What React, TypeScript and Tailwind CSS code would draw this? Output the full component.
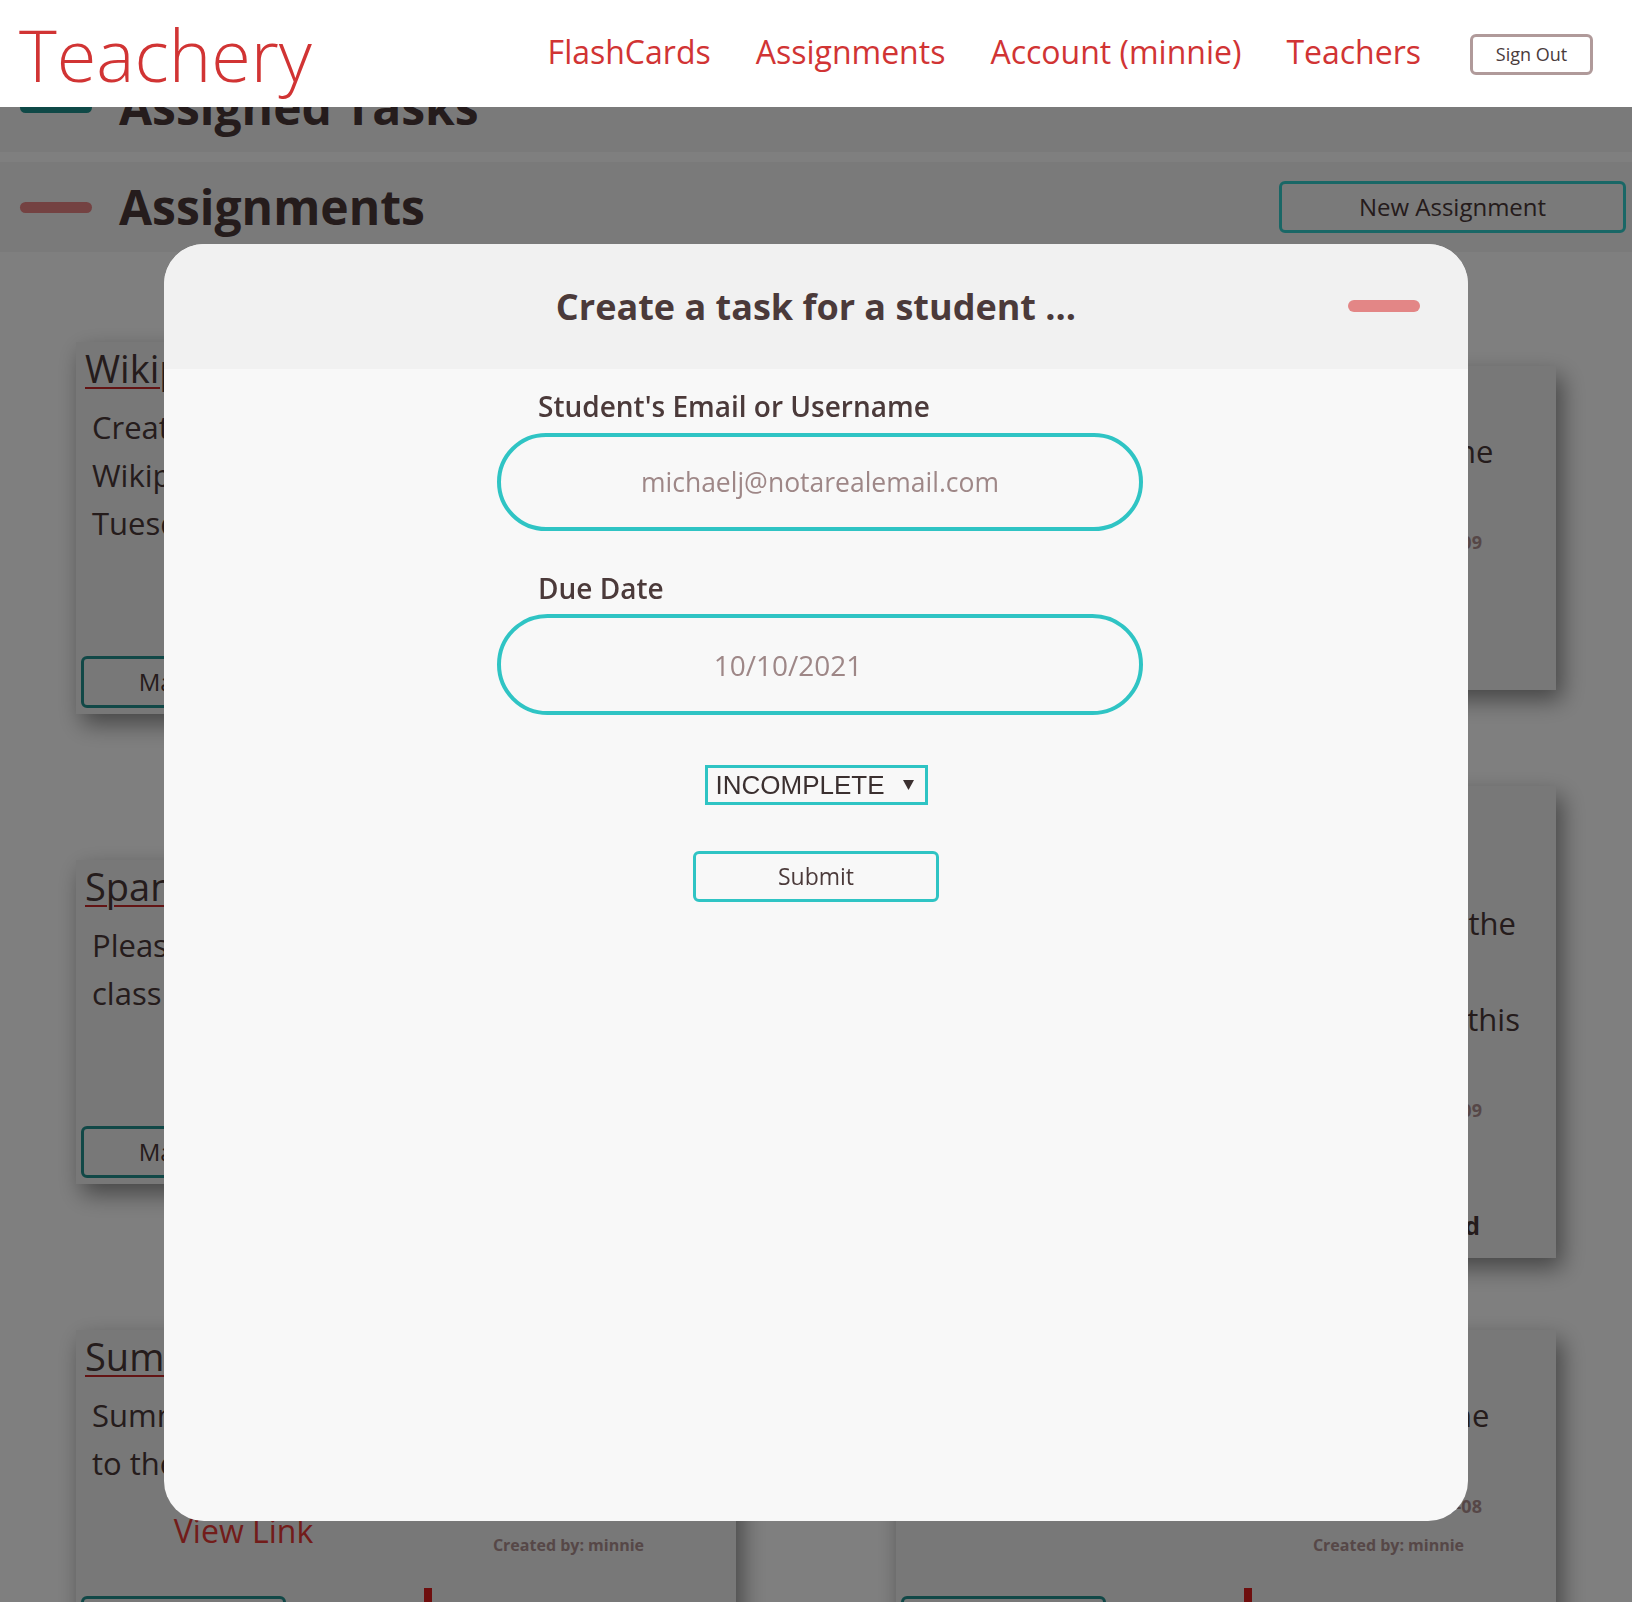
import React from 'react';

interface Assignment {
  title: string;
  lines: string[];
  due: string;
  link?: boolean;
  status?: string;
  tall?: boolean;
}

const ROWS: Assignment[][] = [
  [
    {
      title: 'Wikipedia Summary',
      lines: ['Create a two page summary of a', 'Wikipedia article of your choice. Due', 'Tuesday.'],
      due: '2021-10-12',
      link: true,
    },
    {
      title: 'Reading Quiz',
      lines: ['Complete the reading quiz, found online', 'before Friday.'],
      due: '2021-10-09',
      link: true,
    },
  ],
  [
    {
      title: 'Spanish Vocab',
      lines: ['Please study the words from', 'class on Monday.'],
      due: '2021-10-11',
      link: true,
    },
    {
      title: 'Novel Study',
      lines: [
        'Read chapter five of the novel',
        'and answer all written questions from the',
        'worksheet. Bring your notes to',
        'class on Tuesday so we can all discuss this',
        'in groups.',
      ],
      due: '2021-10-09',
      link: true,
      status: 'Completed',
      tall: true,
    },
  ],
  [
    {
      title: 'Summer Reading',
      lines: ['Summarize your summer book', 'to the class.'],
      due: '2021-10-07',
      link: true,
    },
    {
      title: 'Math Review',
      lines: ['Complete the review sheet found online', 'for the unit test.'],
      due: '2021-10-08',
    },
  ],
];

const AssignmentCard: React.FC<{ item: Assignment }> = ({ item }) => (
  <div
    className={`bg-[#f0f0f0] px-[5px] pb-[6px] shadow-[6px_10px_22px_rgba(0,0,0,0.45)] ${item.tall ? 'pt-[4px]' : ''}`}
  >
    <a className="block h-[52px] whitespace-nowrap pl-[4px] text-[38px] leading-[52px] text-[#4a3838] underline decoration-[#c62828] decoration-2 underline-offset-[4px]">
      {item.title}
    </a>
    <div className="mt-[9px] pl-[11px] text-[31px] leading-[48px] text-[#4a3838]">
      {item.lines.map((l) => (
        <p key={l} className="whitespace-nowrap">{l}</p>
      ))}
    </div>
    <div className="grid h-[78px] grid-cols-2">
      <div className="flex items-center justify-center pt-[10px]">
        {item.link && <a className="text-[32px] text-[#e53935]">View Link</a>}
      </div>
      <div className="flex flex-col items-center font-bold leading-[39px] text-[#ad8f8f]">
        <span className="text-[18px]">Due Date: {item.due}</span>
        <span className="text-[16px]">Created by: minnie</span>
      </div>
    </div>
    <div className="mt-[31px] flex h-[52px] items-center">
      <button className="h-[52px] w-[205px] rounded-[6px] border-[3px] border-[#23918f] text-[24px] text-[#4a3838]">
        Manage
      </button>
      <span className="ml-[138px] -mt-[8px] h-[60px] w-[8px] self-start bg-[#dc1c1c]" />
      {item.status && (
        <span className="ml-auto mr-[71px] text-[25px] font-bold text-[#4a3838]">{item.status}</span>
      )}
    </div>
  </div>
);

export default function App() {
  return (
    <div className="relative h-[1602px] overflow-hidden bg-white font-['Open_Sans',sans-serif]">
      {/* header */}
      <header className="fixed inset-x-0 top-0 z-20 flex h-[107px] items-center bg-white pl-[19px] pr-[39px]">
        <h1 className="text-[72px] font-light leading-none text-[#d13434]">Teachery</h1>
        <nav className="ml-auto -mt-[4px] flex items-center gap-[45px] text-[32px] text-[#d13434]">
          <a>FlashCards</a>
          <a>Assignments</a>
          <a>Account (minnie)</a>
          <a>Teachers</a>
        </nav>
        <button className="ml-[49px] mt-[2px] h-[41px] w-[123px] rounded-[6px] border-[3px] border-[#b09a9a] text-[18px] text-[#4a3b3b]">
          Sign Out
        </button>
      </header>

      {/* page behind the dialog */}
      <main className="pt-[62px]">
        <section className="flex h-[90px] items-center bg-[#f4f4f4] pl-[20px]">
          <span className="h-[11px] w-[72px] rounded-full bg-[#1f938f]" />
          <h2 className="ml-[27px] text-[48px] font-bold text-[#4a3838]">Assigned Tasks</h2>
        </section>
        <section className="mt-[10px] flex h-[90px] items-center bg-[#f4f4f4] pl-[20px] pr-[6px]">
          <span className="h-[11px] w-[72px] rounded-full bg-[#e88484]" />
          <h2 className="ml-[27px] text-[48px] font-bold text-[#4a3838]">Assignments</h2>
          <button className="ml-auto h-[52px] w-[347px] rounded-[6px] border-[3px] border-[#33cfcc] text-[24px] text-[#4a3838]">
            New Assignment
          </button>
        </section>
        <div className="grid grid-cols-2 items-center gap-x-[160px] gap-y-[72px] px-[76px] pt-[90px]">
          {ROWS.flat().map((item) => (
            <AssignmentCard key={item.title} item={item} />
          ))}
        </div>
      </main>

      {/* overlay */}
      <div className="fixed inset-0 z-10 bg-black/50" />

      {/* dialog */}
      <div className="fixed inset-0 z-30 flex justify-center pt-[244px]">
        <div className="flex h-[1277px] w-[1304px] flex-col overflow-hidden rounded-[40px] bg-[#f8f8f8]">
          <div className="relative flex h-[125px] items-center justify-center bg-[#f1f1f1]">
            <h3 className="text-[36px] font-bold text-[#4b3a3a]">Create a task for a student ...</h3>
            <button className="absolute right-[48px] top-[56px] h-[12px] w-[72px] rounded-full bg-[#e38686]" />
          </div>
          <div className="flex flex-col items-center pt-[18px]">
            <div className="ml-[8px] flex w-[646px] flex-col">
              <label className="pl-[41px] text-[28px] font-semibold leading-[38px] text-[#4b3a3a]">
                Student's Email or Username
              </label>
              <input
                placeholder="michaelj@notarealemail.com"
                className="mt-[8px] h-[98px] rounded-full border-[4px] border-[#2fc4c4] bg-transparent text-center text-[26.5px] text-[#4b3a3a] outline-none placeholder:text-[#9e8787]"
              />
              <label className="mt-[38px] pl-[41px] text-[28px] font-semibold leading-[38px] text-[#4b3a3a]">
                Due Date
              </label>
              <input
                placeholder="10/10/2021"
                className="mt-[7px] h-[101px] rounded-full border-[4px] border-[#2fc4c4] bg-transparent pr-[64px] text-center text-[28px] text-[#4b3a3a] outline-none placeholder:text-[#9e8787]"
              />
            </div>
            <div className="mt-[50px] flex h-[40px] w-[223px] items-center border-[3px] border-[#2fc4c4] pl-[8px] font-['Liberation_Sans',Arial,sans-serif] text-[26px] text-[#3b3030]">
              <span>INCOMPLETE</span>
              <svg width="11" height="12" viewBox="0 0 11 12" className="ml-[18px]">
                <path d="M0 1h11L5.5 11z" fill="#3b3030" />
              </svg>
            </div>
            <button className="mt-[46px] h-[51px] w-[246px] rounded-[6px] border-[3px] border-[#2fc4c4] text-[23px] text-[#4b3a3a]">
              Submit
            </button>
          </div>
        </div>
      </div>
    </div>
  );
}
